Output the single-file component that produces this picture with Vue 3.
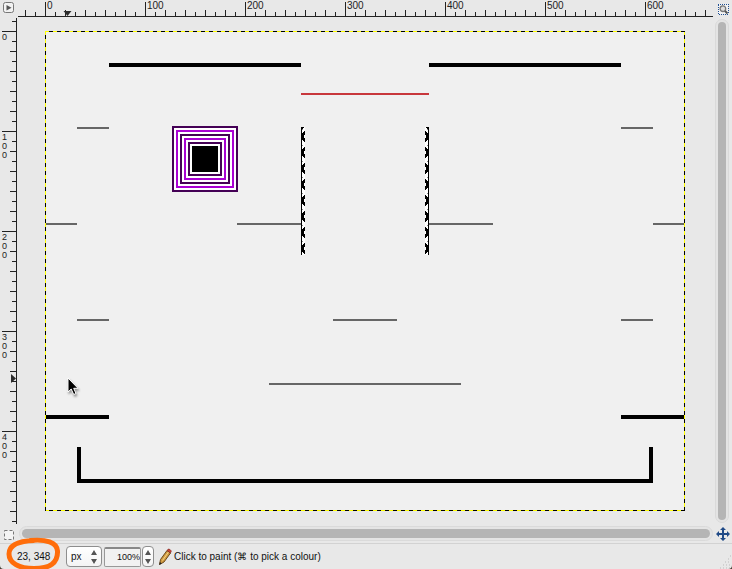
<script setup>
const ox = 27
const oy = 14
const range = (from, to, step) => {
  const out = []
  for (let v = from; v <= to; v += step) out.push(v)
  return out
}
const tickStart = (v) => (v % 100 === 0 ? 2 : v % 20 === 0 ? 10 : 12)
const hTicks = range(-20, 660, 10)
const vTicks = range(-10, 490, 10)
const hLabels = range(0, 600, 100)
const vLabels = range(0, 400, 100)

const ledges = [
  [64, 32, 192], [384, 32, 192], [1, 384, 63], [576, 384, 63],
]
const platforms = [
  [32, 96, 32], [576, 96, 32], [1, 192, 31], [192, 192, 64], [384, 192, 64],
  [608, 192, 31], [32, 288, 32], [288, 288, 64], [576, 288, 32], [224, 352, 192],
]
const rings = [
  [127, 95, 66, '#440055'], [131, 99, 58, '#aa00d4'], [135, 103, 50, '#440055'],
  [139, 107, 42, '#aa00d4'], [143, 111, 34, '#440055'],
]
const spikes = range(0, 112, 16)
</script>

<template>
  <main class="window">
    <section class="editor">
      <button class="corner menu" aria-label="Image menu">
        <svg width="12" height="12" viewBox="0 0 12 12">
          <rect x="0.5" y="0.5" width="10" height="10" rx="2" fill="#f2f2f2" stroke="#777" />
          <path d="M3.5 3V8.5L8.5 5.7Z" fill="#555" />
        </svg>
      </button>

      <svg class="ruler-h" height="17" shape-rendering="crispEdges">
        <rect x="0" y="16" width="100%" height="1" fill="#222" />
        <rect v-for="v in hTicks" :key="v" :x="v + ox" :y="tickStart(v)" width="1" :height="16 - tickStart(v)" fill="#222" />
        <text v-for="v in hLabels" :key="'l' + v" :x="v + ox + 2" y="9">{{ v }}</text>
        <path d="M45.5 11H53.5L49.5 16Z" fill="#2b2b2b" shape-rendering="auto" />
      </svg>

      <button class="corner zoom" aria-label="Zoom image when window size changes">
        <svg width="12" height="12" viewBox="0 0 12 12">
          <rect x="1" y="1" width="10" height="10" fill="#f4f4f4" stroke="#1f4f92" stroke-dasharray="1 1" shape-rendering="crispEdges" />
          <circle cx="5.9" cy="5.7" r="2.8" fill="#ddd" stroke="#777" stroke-width="1.3" />
          <path d="M8 8L10.5 10.5" stroke="#555" stroke-width="2" />
        </svg>
      </button>

      <svg class="ruler-v" width="18" shape-rendering="crispEdges">
        <rect x="16" y="1" width="1" height="100%" fill="#222" />
        <rect v-for="v in vTicks" :key="v" :x="tickStart(v)" :y="v + oy" :width="16 - tickStart(v)" height="1" fill="#222" />
        <g v-for="v in vLabels" :key="'l' + v">
          <text v-for="(d, i) in String(v)" :key="i" class="digit" x="2" :y="v + oy + 9 + i * 9">{{ d }}</text>
        </g>
        <path d="M11 357V366L16 361.5Z" fill="#2b2b2b" shape-rendering="auto" />
      </svg>

      <div class="viewport">
        <svg class="canvas" width="640" height="480" viewBox="0 0 640 480" shape-rendering="crispEdges">
          <defs>
            <g id="spike">
              <rect width="4" height="16" fill="#fff" />
              <path d="M0 0H1V7H2V5H3V4H4V8H3V11H4V15H3V14H2V12H1V16H0Z" fill="#000" />
              <rect x="1" y="6" width="1" height="7" fill="#000" />
              <rect x="1" y="2" width="1" height="1" fill="#888" />
            </g>
            <g id="spike-wall">
              <use v-for="s in spikes" :key="s" href="#spike" :y="s" />
              <path d="M1 0H3V1H2V2H1Z" fill="#000" />
            </g>
          </defs>
          <rect width="640" height="480" fill="#f0f0f0" />
          <rect v-for="(l, i) in ledges" :key="'e' + i" :x="l[0]" :y="l[1]" :width="l[2]" height="4" fill="#000" />
          <rect v-for="(p, i) in platforms" :key="'p' + i" :x="p[0]" :y="p[1]" :width="p[2]" height="2" fill="#666" />
          <rect x="256" y="62" width="128" height="2" fill="#c8373c" />
          <g>
            <rect x="127" y="95" width="66" height="66" fill="#fff" />
            <rect v-for="(r, i) in rings" :key="'r' + i" :x="r[0] + 1" :y="r[1] + 1" :width="r[2] - 2" :height="r[2] - 2" :stroke="r[3]" stroke-width="2" fill="none" />
            <rect x="147" y="115" width="26" height="26" fill="#000" />
          </g>
          <use href="#spike-wall" transform="translate(256 96)" />
          <use href="#spike-wall" transform="translate(384 96) scale(-1 1)" />
          <path d="M32 416H36V448H604V416H608V452H32Z" fill="#000" />
          <rect x="0.5" y="0.5" width="639" height="479" fill="none" stroke="#ff0" />
          <path d="M0 0.5H640M0.5 0V480M639.5 0V480M0 479.5H640" fill="none" stroke="#000" stroke-dasharray="4 4" stroke-dashoffset="4" />
        </svg>
        <svg class="pointer" width="14" height="20" viewBox="0 0 14 20">
          <path d="M1 1V15L4.2 12L6.7 17.5L9 16.5L6.7 11.3H11Z" fill="#000" stroke="#fff" />
        </svg>
      </div>

      <div class="scroll scroll-v"><div class="thumb"></div></div>

      <button class="corner mask" aria-label="Toggle quick mask">
        <svg width="10" height="10" viewBox="0 0 10 10">
          <rect x="0.5" y="0.5" width="9" height="9" fill="#f4f4f4" stroke="#777" stroke-dasharray="3 2" />
        </svg>
      </button>
      <div class="scroll scroll-h"><div class="thumb"></div></div>
      <button class="corner nav" aria-label="Navigate the image display">
        <svg width="14" height="14" viewBox="0 0 14 14">
          <path d="M7 0L10 3H8V6H11V4L14 7L11 10V8H8V11H10L7 14L4 11H6V8H3V10L0 7L3 4V6H6V3H4Z" fill="#204a87" />
        </svg>
      </button>
    </section>

    <footer class="status">
      <output class="coords">23, 348
        <svg class="ring" width="56" height="36" viewBox="0 0 56 36">
          <path d="M24 3.5C40 2 51 5 51.5 14C52 26 44 31.5 28 31.5C13 31.5 3 26 3 17C3 8 12 4 28 3.5" fill="none" stroke="#ff6d0a" stroke-width="5" stroke-linecap="round" />
        </svg>
      </output>
      <span class="unit">
        <select aria-label="Unit"><option>px</option></select>
        <svg width="6" height="14" viewBox="0 0 6 14"><path d="M3 0L6 5H0ZM3 14L0 9H6Z" fill="#555" /></svg>
      </span>
      <input class="percent" aria-label="Zoom" value="100%">
      <button class="stepper" aria-label="Choose zoom">
        <svg width="6" height="14" viewBox="0 0 6 14"><path d="M3 0L6 5H0ZM3 14L0 9H6Z" fill="#555" /></svg>
      </button>
      <svg class="pencil" width="14" height="18" viewBox="0 0 14 18">
        <path d="M1.5 16.5L2.5 11.5L9 2.5L12.5 5L6 14Z" fill="#d09a40" stroke="#6b4a1c" />
        <path d="M4.5 12.5L10.5 4" stroke="#f5d58a" />
        <path d="M9 2.5L10 1.2C11 .5 13.7 2.3 13.2 3.7L12.3 5Z" fill="#c43" stroke="#722" stroke-width=".6" />
        <path d="M1.2 17L1.9 14L3.7 15.4Z" fill="#222" />
      </svg>
      <span class="hint">Click to paint (⌘ to pick a colour)</span>
      <svg class="grip" width="12" height="14" viewBox="0 0 12 14">
        <path d="M10 1h1M8 4h3M5 7h6M3 10h8M0 13h11" stroke="#bbb" stroke-dasharray="1 2" />
      </svg>
    </footer>
  </main>
</template>

<style>
body { background: #4a4038; }
</style>

<style scoped>
.window {
  display: flex;
  flex-direction: column;
  height: 100vh;
  overflow: hidden;
  border-radius: 0 0 4px 4px;
  background: #e8e8e8;
  color: #111;
  font-family: "Liberation Sans", Arial, sans-serif;
  font-size: 10px;
}
.editor {
  flex: 1;
  min-height: 0;
  display: grid;
  grid-template-columns: 18px minmax(0, 1fr) 19px;
  grid-template-rows: 17px minmax(0, 1fr) 19px;
}
button { border: 0; padding: 0; background: none; }
.corner { display: flex; align-items: center; justify-content: center; }
.menu { padding: 0 1px 1px 0; }
.mask { padding-top: 2px; }
.ruler-h { width: 100%; display: block; }
.ruler-v { height: 100%; display: block; }
text { font-size: 10px; fill: #222; }
.digit { font-size: 9px; }
.viewport {
  position: relative;
  padding: 14px 0 0 27px;
  overflow: hidden;
}
.canvas { display: block; }
.pointer { position: absolute; left: 49px; top: 360px; filter: drop-shadow(1px 2px 1px #0006); }
.scroll {
  display: flex;
  padding: 2px;
  border: 1px solid #dadada;
  border-radius: 8px;
  background: #e4e4e4;
}
.scroll-v { margin: 2px 3px 1px 2px; }
.scroll-h { margin: 2px 0 2px 1px; }
.thumb { flex: 1; border-radius: 5px; background: #b5b5b5; }
.status {
  display: flex;
  align-items: center;
  height: 25px;
  border-top: 1px solid #d2d2d2;
}
.coords { position: relative; width: 49px; padding-left: 17px; white-space: nowrap; }
.ring { position: absolute; left: 6px; top: -14px; }
.unit, .stepper {
  display: flex;
  align-items: center;
  justify-content: space-between;
  height: 21px;
  box-sizing: border-box;
  border: 1px solid #8e8e8e;
  border-radius: 4px;
  background: linear-gradient(#fff, #f4f4f4);
}
.unit { width: 36px; padding: 0 4px; }
select {
  appearance: none;
  border: 0;
  padding: 0;
  background: none;
  color: inherit;
  font: 10px "Liberation Sans", Arial, sans-serif;
}
.percent {
  width: 37px;
  height: 20px;
  box-sizing: border-box;
  margin: 0 1px 0 2px;
  padding: 0;
  border: 1px solid #999;
  border-top: 2px solid #888;
  border-radius: 2px;
  background: #f2f2f2;
  color: inherit;
  text-align: right;
  font: 9px "Liberation Sans", Arial, sans-serif;
}
.stepper { width: 12px; justify-content: center; }
.pencil { margin: 0 2px 0 4px; }
.hint { flex: 1; white-space: nowrap; }
.grip { align-self: flex-end; }
</style>
